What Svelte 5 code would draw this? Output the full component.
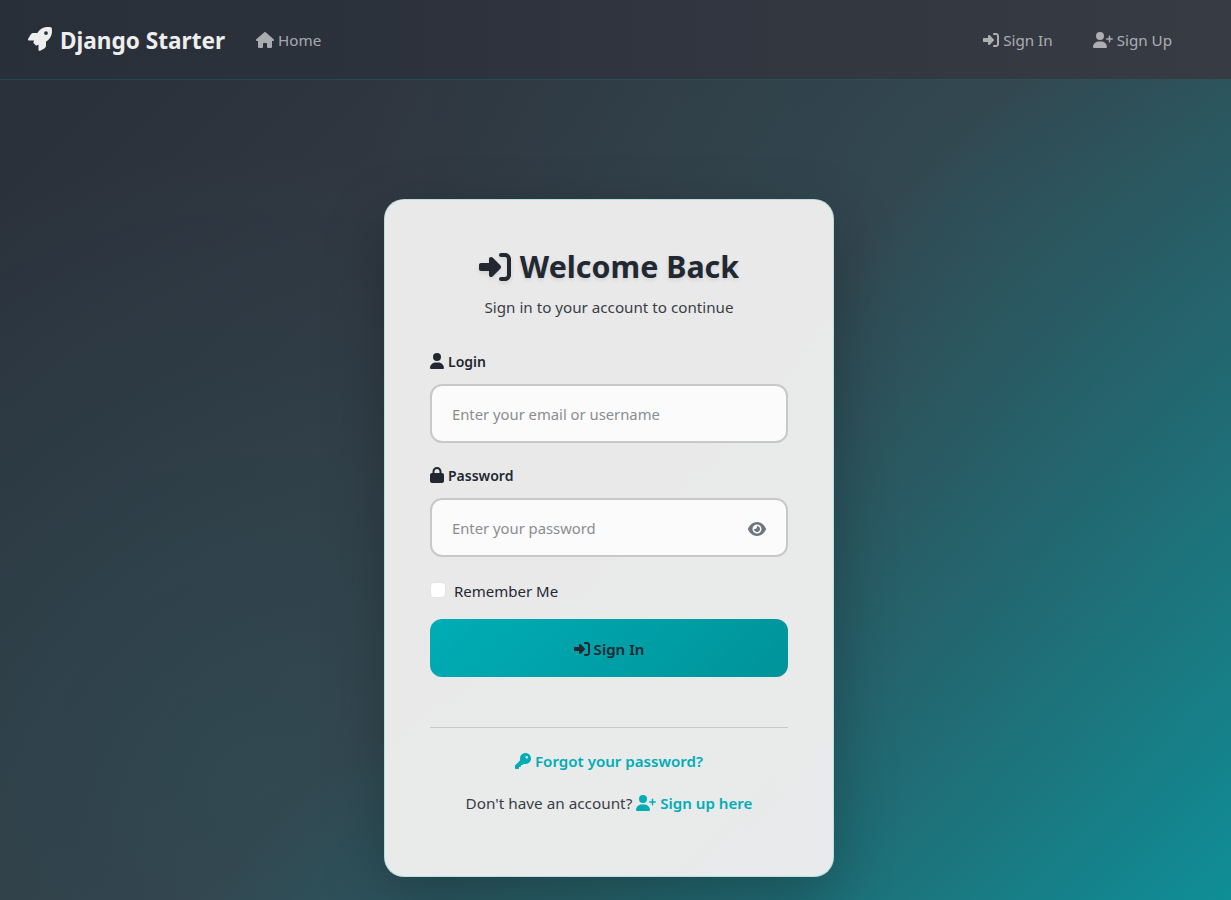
<script>
  const P = {
    signin: "M217.9 105.9L340.7 228.7c7.2 7.2 11.3 17.1 11.3 27.3s-4.1 20.1-11.3 27.3L217.9 406.1c-6.4 6.4-15 9.9-24 9.9c-18.7 0-33.9-15.2-33.9-33.9l0-62.1L32 320c-17.7 0-32-14.3-32-32l0-64c0-17.7 14.3-32 32-32l128 0 0-62.1c0-18.7 15.2-33.9 33.9-33.9c9 0 17.6 3.6 24 9.9zM352 416l64 0c17.7 0 32-14.3 32-32l0-256c0-17.7-14.3-32-32-32l-64 0c-17.7 0-32-14.3-32-32s14.3-32 32-32l64 0c53 0 96 43 96 96l0 256c0 53-43 96-96 96l-64 0c-17.7 0-32-14.3-32-32s14.3-32 32-32z",
    rocket: "M156.6 384.9L125.7 354c-8.5-8.5-11.5-20.8-7.7-32.2c3-8.9 7-20.5 11.8-33.8L24 288c-8.6 0-16.6-4.6-20.9-12.1s-4.2-16.7 .2-24.1l52.5-88.5c13-21.9 36.5-35.3 61.9-35.3l82.3 0c2.4-4 4.8-7.7 7.2-11.3C289.1-4.1 411.1-8.1 483.9 5.3c11.6 2.1 20.6 11.2 22.8 22.8c13.4 72.9 9.3 194.8-111.4 276.7c-3.5 2.4-7.3 4.8-11.3 7.2v82.3c0 25.4-13.4 49-35.3 61.9l-88.5 52.5c-7.4 4.4-16.6 4.5-24.1 .2s-12.1-12.2-12.1-20.9V380.8c-14.1 4.9-26.4 8.9-35.7 11.9c-11.2 3.6-23.4 .5-31.8-7.8zM384 168a40 40 0 1 0 0-80 40 40 0 1 0 0 80z",
    home: "M575.8 255.5c0 18-15 32.1-32 32.1h-32l.7 160.2c0 2.7-.2 5.4-.5 8.1V472c0 22.1-17.9 40-40 40H456c-1.1 0-2.2 0-3.3-.1c-1.4 .1-2.8 .1-4.2 .1H416 392c-22.1 0-40-17.9-40-40V448 384c0-17.7-14.3-32-32-32H256c-17.7 0-32 14.3-32 32v64 24c0 22.1-17.9 40-40 40H160 128.1c-1.5 0-3-.1-4.5-.2c-1.2 .1-2.4 .2-3.6 .2H104c-22.1 0-40-17.9-40-40V360c0-.9 0-1.9 .1-2.8V287.6H32c-18 0-32-14-32-32.1c0-9 3-17 10-24L266.4 8c7-7 15-8 22-8s15 2 21 7L564.8 231.5c8 7 12 15 11 24z",
    userplus: "M96 128a128 128 0 1 1 256 0A128 128 0 1 1 96 128zM0 482.3C0 383.8 79.8 304 178.3 304h91.4C368.2 304 448 383.8 448 482.3c0 16.4-13.3 29.7-29.7 29.7H29.7C13.3 512 0 498.7 0 482.3zM504 312V248H440c-13.3 0-24-10.7-24-24s10.7-24 24-24h64V136c0-13.3 10.7-24 24-24s24 10.7 24 24v64h64c13.3 0 24 10.7 24 24s-10.7 24-24 24H552v64c0 13.3-10.7 24-24 24s-24-10.7-24-24z",
    user: "M224 256A128 128 0 1 0 224 0a128 128 0 1 0 0 256zm-45.7 48C79.8 304 0 383.8 0 482.3C0 498.7 13.3 512 29.7 512H418.3c16.4 0 29.7-13.3 29.7-29.7C448 383.8 368.2 304 269.7 304H178.3z",
    lock: "M144 144v48H304V144c0-44.2-35.8-80-80-80s-80 35.8-80 80zM80 192V144C80 64.5 144.5 0 224 0s144 64.5 144 144v48h16c35.3 0 64 28.7 64 64V448c0 35.3-28.7 64-64 64H64c-35.3 0-64-28.7-64-64V256c0-35.3 28.7-64 64-64H80z",
    eye: "M288 32c-80.8 0-145.5 36.8-192.6 80.6C48.6 156 17.3 208 2.5 243.7c-3.3 7.9-3.3 16.7 0 24.6C17.3 304 48.6 356 95.4 399.4C142.5 443.2 207.2 480 288 480s145.5-36.8 192.6-80.6c46.8-43.5 78.1-95.4 93-131.1c3.3-7.9 3.3-16.7 0-24.6c-14.9-35.7-46.2-87.7-93-131.1C433.5 68.8 368.8 32 288 32zM144 256a144 144 0 1 1 288 0 144 144 0 1 1 -288 0zm144-64c0 35.3-28.7 64-64 64c-7.1 0-13.9-1.2-20.3-3.3c-5.5-1.8-11.9 1.6-11.7 7.4c.3 6.9 1.3 13.8 3.2 20.7c13.7 51.2 66.4 81.6 117.6 67.9s81.6-66.4 67.9-117.6c-11.1-41.5-47.8-69.4-88.6-71.1c-5.8-.2-9.2 6.1-7.4 11.7c2.1 6.4 3.3 13.2 3.3 20.3z",
    key: "M336 352c97.2 0 176-78.8 176-176S433.2 0 336 0S160 78.8 160 176c0 18.7 2.9 36.8 8.3 53.7L7 391c-4.5 4.5-7 10.6-7 17v80c0 13.3 10.7 24 24 24h80c13.3 0 24-10.7 24-24V448h40c13.3 0 24-10.7 24-24V384h40c6.4 0 12.5-2.5 17-7l33.3-33.3c16.9 5.4 35 8.3 53.7 8.3zM376 96a40 40 0 1 1 0 80 40 40 0 1 1 0-80z"
  };
  const W = { signin: 512, rocket: 512, home: 576, userplus: 640, user: 448, lock: 448, eye: 576, key: 512 };
</script>

{#snippet icon(name)}
  <svg class="icon" viewBox="0 0 {W[name]} 512" aria-hidden="true"><path d={P[name]} fill="currentColor" /></svg>
{/snippet}

<div class="page">
  <nav class="nav">
    <a class="brand" href="#top">{@render icon('rocket')}<span>Django Starter</span></a>
    <a class="link" href="#top">{@render icon('home')}<span>Home</span></a>
    <div class="right">
      <a class="link" href="#top">{@render icon('signin')}<span>Sign In</span></a>
      <a class="link" href="#top">{@render icon('userplus')}<span>Sign Up</span></a>
    </div>
  </nav>

  <main class="main">
    <section class="card">
      <header class="head">
        <h1>{@render icon('signin')}<span>Welcome Back</span></h1>
        <p>Sign in to your account to continue</p>
      </header>

      <form class="form">
        <div class="field">
          <label for="login">{@render icon('user')}<span>Login</span></label>
          <input id="login" type="text" placeholder="Enter your email or username" />
        </div>
        <div class="field">
          <label for="password">{@render icon('lock')}<span>Password</span></label>
          <div class="pw">
            <input id="password" type="password" placeholder="Enter your password" />
            <span class="eye">{@render icon('eye')}</span>
          </div>
        </div>
        <label class="remember"><input type="checkbox" /><span>Remember Me</span></label>
        <button type="button" class="submit">{@render icon('signin')}<span>Sign In</span></button>
      </form>

      <div class="foot">
        <p><a href="#top">{@render icon('key')}<span>Forgot your password?</span></a></p>
        <p>Don't have an account? <a href="#top">{@render icon('userplus')}<span>Sign up here</span></a></p>
      </div>
    </section>
  </main>
</div>

<style>
  :global(html), :global(body) { margin: 0; height: 900px; overflow: hidden; }
  :global(body) {
    font-family: "Noto Sans", "Open Sans", sans-serif;
    font-size: 15px;
    color: #222831;
  }
  * { box-sizing: border-box; }
  a { text-decoration: none; color: inherit; }
  .page {
    height: 900px;
    overflow: hidden;
    background:
      radial-gradient(circle at 20% 80%, rgba(0, 173, 181, 0.1), transparent 50%) 0 0 / 100% 960px no-repeat,
      radial-gradient(circle at 80% 20%, rgba(0, 173, 181, 0.1), transparent 50%) 0 0 / 100% 960px no-repeat,
      linear-gradient(135deg, #282f39 0%, #373e47 50%, #00adb5 115%) 0 0 / 100% 960px no-repeat;
  }
  .icon { height: 16px; width: auto; vertical-align: -2px; display: inline-block; margin-right: 4px; }
  .nav {
    height: 80px;
    display: flex;
    align-items: center;
    padding: 0 59px 0 28px;
    background: linear-gradient(90deg, #292f39, #2c323c 30%, #373b44);
    border-bottom: 1px solid rgba(0, 173, 181, 0.2);
  }
  .brand { font-size: 22.6px; font-weight: 700; color: #eeeeee; margin-right: 31px; position: relative; top: 1px; }
  .brand .icon { height: 24px; vertical-align: -3px; margin-right: 8px; position: relative; top: -1px; }
  .link { color: rgba(238, 238, 238, 0.65); font-size: 15.2px; }
  .right { margin-left: auto; display: flex; gap: 40px; }
  .main { display: flex; justify-content: center; padding: 119px 13px 0 0; }
  .card {
    width: 450px;
    height: 678px;
    padding: 45px;
    background: rgba(238, 238, 238, 0.975);
    border: 1px solid rgba(0, 173, 181, 0.2);
    border-radius: 20px;
    box-shadow: 0 20px 60px rgba(0, 0, 0, 0.25);
  }
  .head { text-align: center; }
  h1 { margin: 0; font-size: 30.4px; font-weight: 700; line-height: 44px; text-shadow: 0 2px 4px rgba(0,0,0,.1); }
  h1 .icon { height: 32px; vertical-align: -5px; margin-right: 9px; filter: drop-shadow(0 2px 2px rgba(0,0,0,.1)); }
  .head p { margin: 6px 0 0; font-size: 15.2px; color: #393e46; line-height: 24px; }
  .form { margin-top: 32px; display: flex; flex-direction: column; }
  .field { margin-bottom: 22px; }
  .field label { display: block; font-weight: 600; font-size: 14px; line-height: 21px; margin-bottom: 12px; }
  input[type=text], input[type=password] {
    display: block;
    width: 100%;
    height: 59px;
    padding: 0 20px;
    border: 2px solid #c8c8c8;
    border-radius: 12px;
    background: rgba(255,255,255,.8);
    font: inherit;
    font-size: 14.8px;
    color: #222831;
    outline: none;
  }
  input::placeholder { color: #8a8d91; opacity: 1; }
  .pw { position: relative; }
  .eye { position: absolute; right: 22px; top: 50%; margin-top: 1px; transform: translateY(-50%); color: #6c757d; line-height: 0; }
  .eye .icon { margin: 0; vertical-align: 0; }
  .remember { display: flex; align-items: center; gap: 8px; height: 24px; font-size: 15px; color: #222831; margin-bottom: 16px; }
  .remember input { width: 16px; height: 16px; margin: -2px 0 0; appearance: none; background: #fff; border-radius: 4px; border: 1px solid #e4e4e4; }
  .submit {
    height: 58px;
    padding: 1px 0 0;
    border: 0;
    border-radius: 12px;
    background: linear-gradient(135deg, #00adb5, #00939a);
    color: #222831;
    font: inherit;
    font-weight: 560;
    font-size: 15.1px;
  }
  .foot { margin-top: 50px; padding-top: 21px; border-top: 1px solid #c8c8c8; text-align: center; }
  .foot p { margin: 0 0 18px; line-height: 24px; font-size: 15.3px; color: #393e46; }
  .foot a { color: #00adb5; font-weight: 560; font-size: 15.1px; }
</style>
